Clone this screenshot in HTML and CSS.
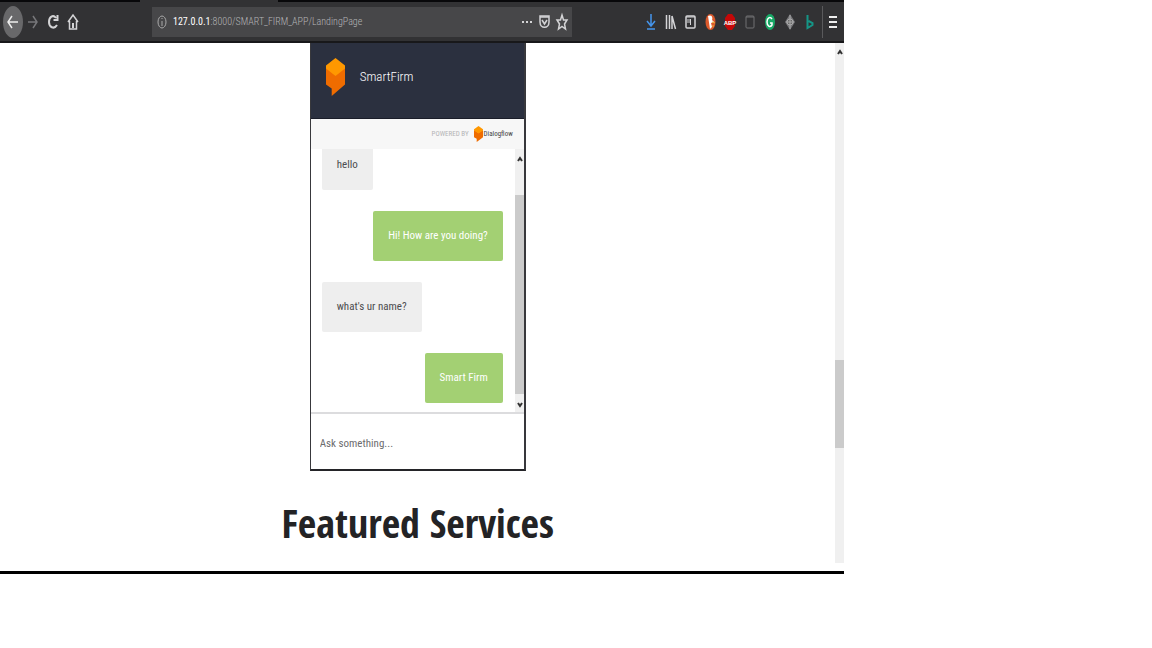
FILE: index.html
```html
<!DOCTYPE html>
<html lang="en">
<head>
<meta charset="utf-8">
<meta name="viewport" content="width=device-width, initial-scale=1">
<title>SmartFirm</title>
<link rel="stylesheet" href="styles.css">
</head>
<body>
<svg class="defs" aria-hidden="true">
  <symbol id="dialogflow" viewBox="0 0 20 40" preserveAspectRatio="none">
    <path fill="#ef6c00" d="M0 10 10 17 20 10V28L6 40V32L0 28Z"/>
    <path fill="#ff9800" d="M10 0 20 8V11L10 19 0 11V8Z"/>
  </symbol>
</svg>
<div class="browser">
  <div class="tabstrip"><div class="tab"></div></div>
  <header class="toolbar">
    <nav class="nav" aria-label="Browser">
      <button class="tool back" aria-label="Back"><svg viewBox="0 0 20 30"><path stroke-width="1.500" d="M15 15H5M9 9 5 15l4 6"/></svg></button>
      <button class="tool forward" aria-label="Forward"><svg viewBox="0 0 20 30"><path stroke-width="1.500" d="M5 15h9M10 9l4 6-4 6"/></svg></button>
      <button class="tool" aria-label="Reload"><svg viewBox="0 0 20 30"><path stroke-width="2" d="M13 11C10 7 6 10 6 15s5 8 8 3M14.500 8v5H10.500"/></svg></button>
      <button class="tool" aria-label="Home"><svg viewBox="0 0 20 30"><path stroke-width="1.500" d="M5 15l5-7 5 7M6.500 14v8h7v-8"/><path d="M10 16v5" stroke-width="2"/></svg></button>
    </nav>
    <div class="address">
      <svg class="info" viewBox="0 0 12 16"><ellipse cx="6" cy="8" rx="4" ry="6"/><path d="M6 7v5M6 4v1"/></svg>
      <div class="url"><b>127.0.0.1</b>:8000/SMART_FIRM_APP/LandingPage</div>
      <button class="page-action" aria-label="Page actions"><svg viewBox="0 0 18 30"><path stroke-width="2" d="M5 15h2M9 15h2M13 15h2"/></svg></button>
      <button class="page-action" aria-label="Save to Pocket"><svg viewBox="0 0 18 30"><path stroke-width="1.500" d="M5 9h9v6c0 7-9 7-9 0z"/><path stroke-width="1.500" d="M5 10h9M7 13l2.500 4 2.500-4"/></svg></button>
      <button class="page-action" aria-label="Bookmark"><svg viewBox="0 0 18 30"><path stroke-width="1.500" d="M9 8l1.500 5H14l-2.500 4 1 5L9 19.500 5.500 22l1-5L4 13h3.500z"/></svg></button>
    </div>
    <div class="extensions">
      <button class="tool download" aria-label="Downloads"><svg viewBox="0 0 20 30"><path stroke-width="1.500" d="M11 7v12M7 14l4 5 4-5M7 22h8"/></svg></button>
      <button class="tool" aria-label="Library"><svg viewBox="0 0 20 30"><path stroke-width="1.500" d="M6.500 8v14M9.500 8v14M12 9v13M12 9l3.500 13"/></svg></button>
      <button class="tool" aria-label="Sidebar"><svg viewBox="0 0 20 30"><rect stroke-width="1.500" x="6" y="9" width="9" height="12" rx="1"/><path d="M6 10h9M10.500 12v6M7 13h3M7 15h3"/></svg></button>
      <button class="tool" aria-label="DuckDuckGo"><svg viewBox="0 0 20 30"><ellipse cx="10.500" cy="15" rx="5" ry="8" fill="#dc5a2c" stroke="none"/><path d="M8 9c4-2 5 2 4 4l2 2-3 1 1 4-2 2z" fill="#fff" stroke="none"/><path d="M12 15l3 1M12 19h2" stroke="#e8b33a"/></svg></button>
      <button class="tool" aria-label="ABP"><svg viewBox="0 0 20 30"><path d="M8 7h4l3 4v8l-3 4H8l-3-4v-8z" fill="#c40808" stroke="none"/><text x="10" y="18" text-anchor="middle" class="abp">ABP</text></svg></button>
      <button class="tool dim" aria-label="Container"><svg viewBox="0 0 20 30"><rect x="6" y="9" width="8" height="12" rx="1"/><path d="M6 10h8"/></svg></button>
      <button class="tool" aria-label="Grammarly"><svg viewBox="0 0 20 30"><ellipse cx="10" cy="15" rx="5" ry="8" fill="#18a866" stroke="none"/><path stroke-width="1.500" d="M12 12c-2-3-5-1-5 3s3 6 5 3v-2h-2" stroke="#fff"/></svg></button>
      <button class="tool" aria-label="Extension"><svg viewBox="0 0 20 30"><path d="M10 7l5 8-5 8-5-8z" fill="#77777a" stroke="none"/><circle cx="10" cy="15" r="3" fill="#666" stroke="#aaa"/><path d="M10 8v14M6 15h8" stroke="#aaa"/></svg></button>
      <button class="tool bing" aria-label="Bing"><svg viewBox="0 0 20 30"><path stroke-width="2" d="M7.500 8v13l5-3v-2l-4-2"/></svg></button>
      <button class="tool menu" aria-label="Menu"><svg viewBox="0 0 20 30"><path stroke-width="2" d="M6 10h8M6 15h8M6 20h8"/></svg></button>
    </div>
  </header>
  <div class="viewport">
    <main class="page">
      <section class="chat" aria-label="SmartFirm chat">
        <div class="chat-head">
          <svg class="chat-logo" aria-hidden="true"><use href="#dialogflow"/></svg>
          <div class="chat-name">SmartFirm</div>
        </div>
        <div class="powered">
          <span>POWERED BY</span>
          <a class="brand" href="#"><svg class="brand-logo" aria-hidden="true"><use href="#dialogflow"/></svg>Dialogflow</a>
        </div>
        <div class="chat-body">
          <div class="messages">
            <div class="msg first">hello</div>
            <div class="msg reply">Hi! How are you doing?</div>
            <div class="msg">what's ur name?</div>
            <div class="msg reply">Smart Firm</div>
          </div>
          <div class="scroll chat-scroll">
            <svg class="arrow" viewBox="0 0 9 18"><path d="M3 12l2-3 2 3"/></svg>
            <div class="chat-space"></div>
            <div class="thumb chat-thumb"></div>
            <svg class="arrow" viewBox="0 0 9 18"><path d="M3 9l2 3 2-3"/></svg>
          </div>
        </div>
        <form class="ask"><input class="ask-input" type="text" aria-label="Ask something" placeholder="Ask something..."></form>
      </section>
      <h1 class="title">Featured Services</h1>
    </main>
    <div class="scroll">
      <svg class="arrow" viewBox="0 0 9 18"><path d="M3 11l2-3 2 3"/></svg>
      <div class="page-space"></div>
      <div class="thumb page-thumb"></div>
    </div>
  </div>
</div>
</body>
</html>
```
FILE: styles.css
```css
* { box-sizing: border-box; }
body {
  margin: 0;
  background: #fff;
  font-family: "Roboto Condensed", Roboto, sans-serif;
}
.defs { position: absolute; width: 0; height: 0; }
button { padding: 0; border: 0; background: none; color: inherit; }
svg { display: block; fill: none; stroke: currentColor; }
.browser { width: 73.3%; border-bottom: 3px solid #000; }
.tabstrip { height: 2px; padding-left: 140px; background: #08080a; }
.tab { width: 138px; height: 2px; background: #323234; }
.toolbar {
  display: flex;
  align-items: center;
  height: 41px;
  padding-left: 3px;
  padding-right: 2px;
  border-bottom: 2px solid #18181a;
  background: #323234;
  color: #d4d4d6;
}
.nav, .extensions { display: flex; }
.tool { width: 20px; height: 32px; }
.tool svg { width: 20px; height: 30px; }
.back { border-radius: 50%; background: #68686a; color: #eee; }
.forward { color: #77777a; }
.address {
  display: flex;
  align-items: center;
  flex: 0 1 420px;
  height: 30px;
  margin-left: 69px;
  padding: 0 1px 0 4px;
  background: #474749;
}
.info { width: 12px; height: 16px; color: #aaa; }
.url { flex: 1; padding-left: 5px; font-size: 10px; font-weight: 300; color: #b4b4b6; white-space: nowrap; }
.url b { font-weight: 400; color: #fff; }
.page-action { width: 18px; height: 30px; }
.extensions { margin-left: auto; }
.download { color: #4595ec; }
.dim { color: #707072; }
.bing { color: #159586; }
.abp { fill: #fff; stroke: none; font-size: 6px; font-weight: 700; }
.menu { margin-left: 2px; border-left: 1px solid #5a5a5c; color: #eee; }
.viewport { display: flex; }
.page { flex: 1; min-width: 0; }
.scroll { display: flex; flex-direction: column; width: 9px; margin-bottom: 8px; background: #f0f0f0; }
.arrow { width: 9px; height: 18px; color: #333; stroke-width: 2; }
.thumb { background: #cbcbcb; }
.page-space { height: 299px; }
.page-thumb { height: 88px; }
.chat { width: 216px; margin: 0 auto; border: 1px solid #38383c; border-top: 0; border-right-width: 2px; border-bottom: 2px solid #242428; }
.chat-head { display: flex; align-items: center; height: 76px; padding: 0 15px 8px; border-bottom: 1px solid #1a1d29; background: #2b303f; color: #fff; }
.chat-logo { width: 19px; height: 38px; stroke: none; }
.chat-name { margin-left: 15px; font-size: 13px; font-weight: 300; }
.powered { display: flex; align-items: center; justify-content: flex-end; gap: 5px; height: 30px; padding-right: 11px; background: #f7f7f7; color: #b4b4b6; font-size: 7px; }
.brand { display: flex; align-items: center; gap: 1px; color: #444; font-size: 7px; text-decoration: none; }
.brand-logo { width: 9px; height: 16px; stroke: none; }
.chat-body { display: flex; border-bottom: 2px solid #dcdcde; }
.messages { display: flex; flex: 1; flex-direction: column; align-items: flex-start; gap: 21px; padding: 0 12px 9px 11px; }
.msg { padding: 16px 15px; border-radius: 2px; background: #eee; color: #4c4c4e; font-size: 11px; line-height: 18px; }
.first { padding-top: 7px; border-radius: 0 0 2px 2px; }
.reply { align-self: flex-end; background: #a3d073; color: #fff; }
.chat-scroll { margin-bottom: 0; }
.chat-space { height: 28px; }
.chat-thumb { flex: 1; }
.ask { display: flex; height: 55px; }
.ask-input { width: 100%; padding: 4px 9px 0; border: 0; outline: 0; background: transparent; font-family: inherit; font-size: 11px; }
.ask-input::placeholder { color: #6c6c6e; }
.title { margin: 26px 0 22px; font-family: "Open Sans Condensed", "Roboto Condensed", Lato, sans-serif; font-size: 40px; font-weight: 600; line-height: 52px; text-align: center; color: #232325; }
```
